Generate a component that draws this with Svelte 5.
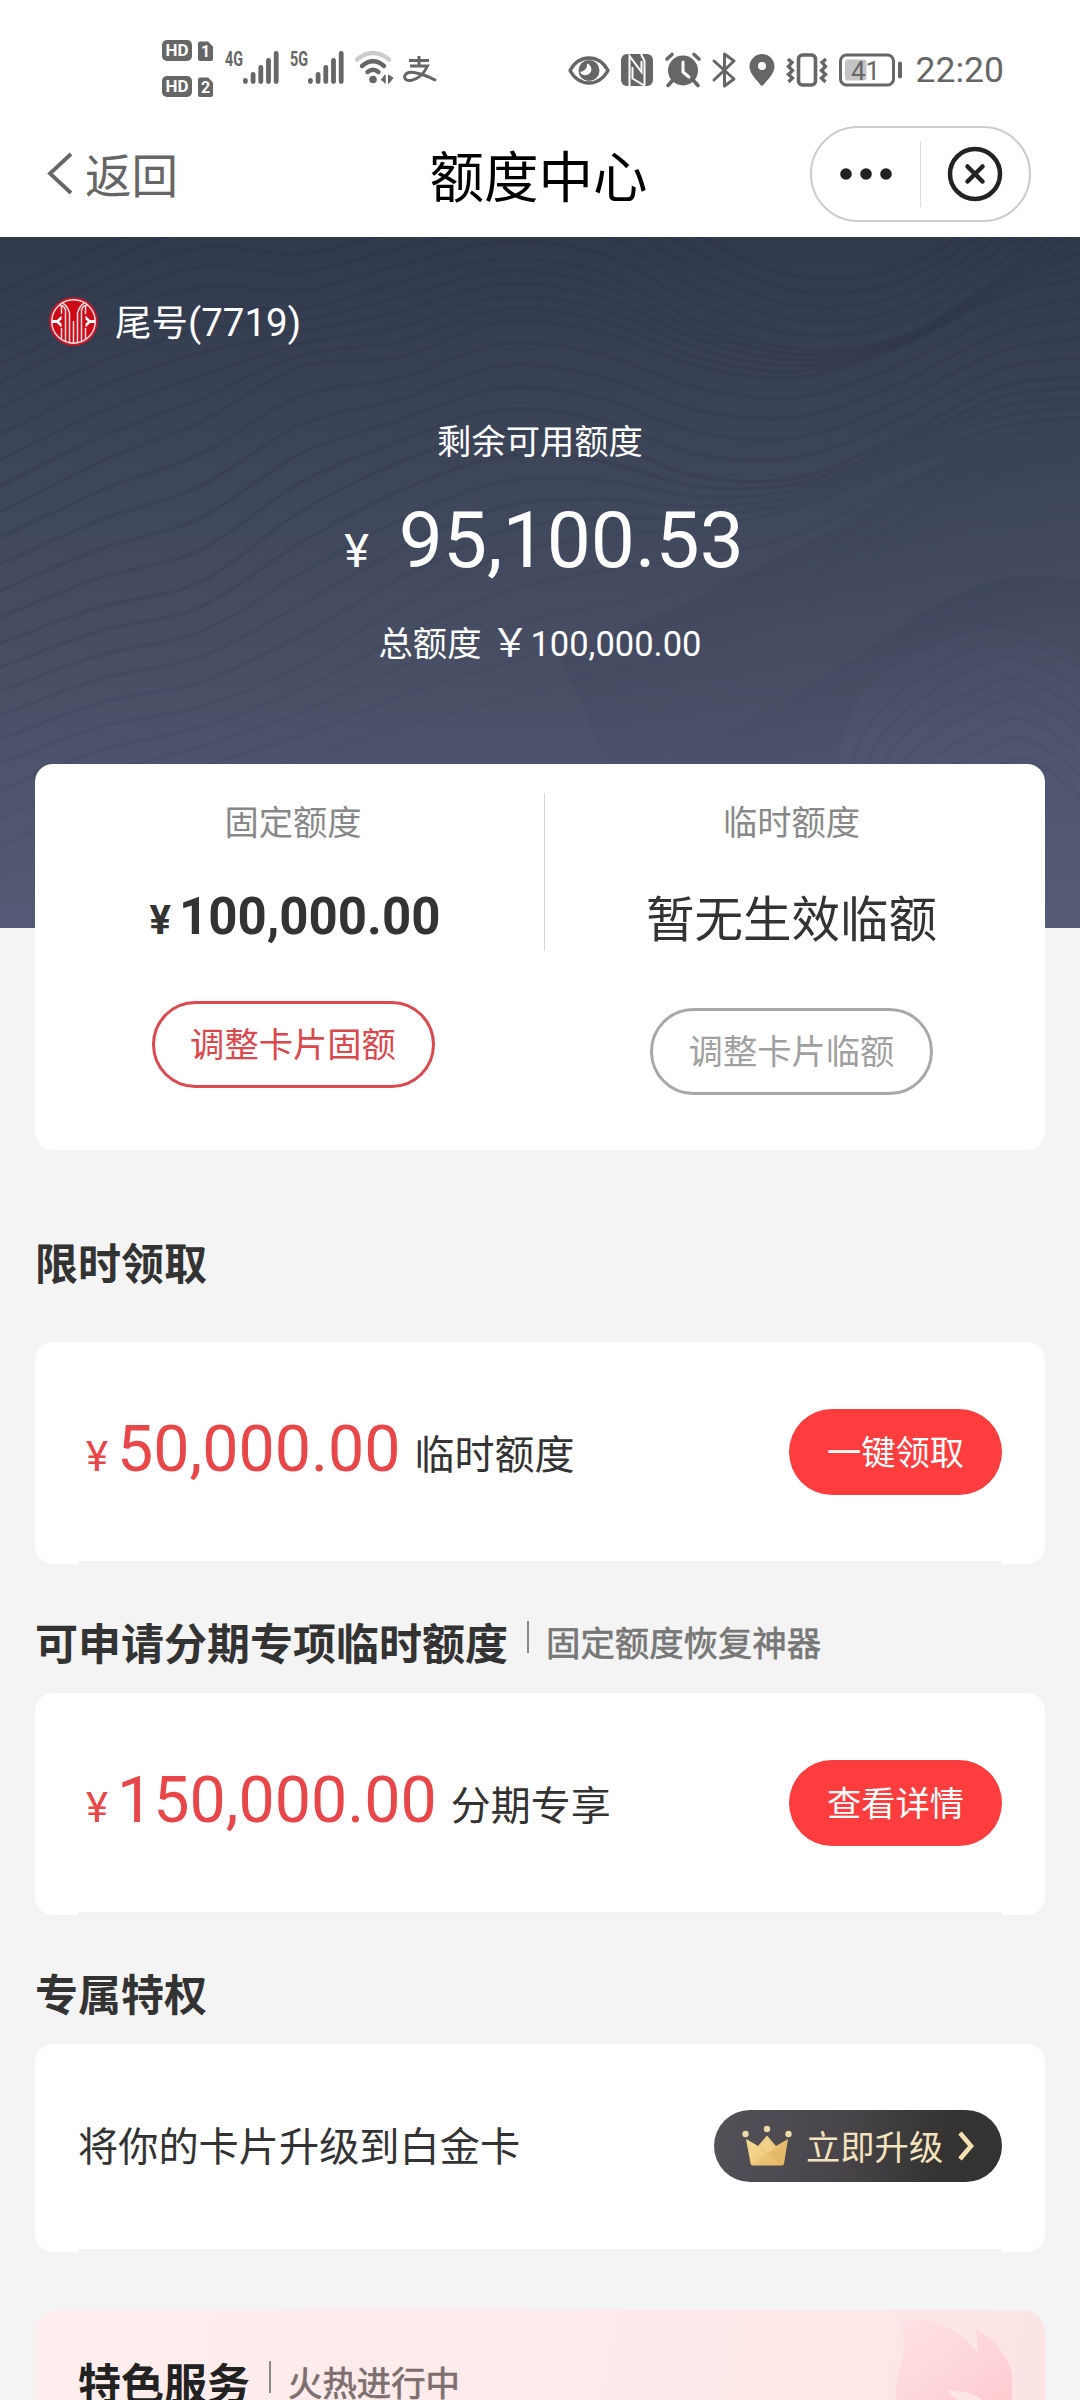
<script lang="ts">
	interface Offer {
		title: string,
		note?: string,
		amount: string,
		label: string,
		action: string,
	}

	const offers: Offer[] = [
		{ title: "限时领取", amount: "50,000.00", label: "临时额度", action: "一键领取" },
		{ title: "可申请分期专项临时额度", note: "固定额度恢复神器", amount: "150,000.00", label: "分期专享", action: "查看详情" },
	];

	// contour lines behind the balance: key curves, one y for each x, blended in steps
	const xs = [-10, 100, 200, 300, 400, 500, 600, 700, 800, 900, 1000, 1090];
	const keys = [
		[60, 10, -30, -20, -40, -60, -60, 0, 40, 30, -30, -120],
		[150, 100, 70, 72, 45, 22, 35, 85, 112, 100, 40, -30],
		[280, 225, 185, 130, 120, 85, 95, 130, 140, 110, 60, 40],
		[410, 370, 345, 275, 225, 195, 205, 240, 240, 200, 150, 140],
		[530, 490, 470, 430, 370, 320, 300, 290, 270, 230, 200, 190],
		[670, 610, 570, 545, 520, 500, 470, 440, 400, 320, 260, 230],
	];

	function smooth(ys: number[]){
		let d = `M${xs[0]} ${ys[0]}`;
		for (let i = 0; i < xs.length - 1; i++) {
			const p = Math.max(i - 1, 0);
			const n = Math.min(i + 2, xs.length - 1);
			d += `C${xs[i] + (xs[i + 1] - xs[p]) / 6} ${ys[i] + (ys[i + 1] - ys[p]) / 6} ${xs[i + 1] - (xs[n] - xs[i]) / 6} ${ys[i + 1] - (ys[n] - ys[i]) / 6} ${xs[i + 1]} ${ys[i + 1]}`;
		}
		return d;
	}

	const waves: string[] = [];
	for (let k = 0; k < keys.length - 1; k++) {
		for (let s = 0; s < 5; s++) {
			waves.push(smooth(keys[k].map((y, i) => y + (keys[k + 1][i] - y) * s / 5)));
		}
	}
	const rings = [0, 1, 2, 3, 4, 5, 6];
	const bars = [6, 12, 19, 26, 33];
</script>

{#snippet signal(label: string)}
	<svg class="signal" width="54" height="36" viewBox="0 0 54 36">
		<text x="0" y="16" font-size="20" textLength="18" lengthAdjust="spacingAndGlyphs">{label}</text>
		{#each bars as h, i}
			<rect x={18 + i * 7.7} y={34 - h} width="4.8" height={h} rx="2.4" />
		{/each}
	</svg>
{/snippet}

{#snippet hd(n: string)}
	<svg width="52" height="22" viewBox="0 0 52 22">
		<rect width="30" height="21" rx="5" />
		<text class="knock" x="3.5" y="16.3" font-size="17" textLength="23" lengthAdjust="spacingAndGlyphs">HD</text>
		<path d="M38 1.500h8l5 5V19q0 2-2 2H38q-2 0-2-2V3.500q0-2 2-2z" />
		<text class="knock" x="39" y="17.300" font-size="16">{n}</text>
	</svg>
{/snippet}

<div class="page">
	<div class="status">
		<div class="sims">
			{@render hd("1")}
			{@render hd("2")}
		</div>
		{@render signal("4G")}
		{@render signal("5G")}
		<svg class="wifi" width="42" height="36" viewBox="0 0 42 36">
			<g fill="none" stroke="#666" stroke-width="4.400" stroke-linecap="round">
				<path stroke="#ccc" d="M3 9.500Q19 -3.500 35 9.500" />
				<path d="M8 16q11-9.500 22 0M13.500 22q5.500-4.500 11 0" />
			</g>
			<circle cx="19" cy="29.500" r="3.800" />
			<path d="M31 25v8.500M27 30l4-5v8M34.500 25v8.500l4.500-5.500z" stroke="#666" stroke-width="1" />
		</svg>
		<svg class="pay" width="35" height="30" viewBox="0 0 35 30">
			<path d="M6 5.500h20M16 1v9.500M7 11h17.500Q19 23 8 25.500Q1.500 26 1.500 21.500Q3 16.500 11 17.500Q22 19.500 33 25.500" fill="none" stroke="#666" stroke-width="3" />
		</svg>

		<div class="right">
			<svg width="42" height="36" viewBox="0 0 42 36">
				<path d="M2 18.500Q9 6 21 6T40 18.500Q33 31 21 31T2 18.500z" fill="none" stroke="#666" stroke-width="3.400" stroke-linejoin="round" />
				<circle cx="21" cy="18.500" r="10.500" />
				<path d="M19 11.500a6 6 0 1 1-7 8.500a7.500 7.500 0 0 0 7-8.500z" fill="#fff" />
			</svg>
			<svg class="nfc" width="32" height="36" viewBox="0 0 32 36">
				<rect y="2" width="32" height="32" rx="6" />
				<path d="M8.500 34V4L20.500 20V9M11.500 15v11.500L24 34M23.500 33V9L20 2" fill="none" stroke="#fff" stroke-width="2" />
			</svg>
			<svg class="alarm" width="36" height="36" viewBox="0 0 36 36">
				<circle cx="18" cy="18.500" r="15" />
				<path d="M2 7l5-4.500M34 7l-5-4.500M7 29l-4 4.500M29 29l4 4.500" stroke="#666" stroke-width="3.600" stroke-linecap="round" />
				<path d="M18 10v10l6 5" fill="none" stroke="#fff" stroke-width="3" stroke-linecap="round" />
			</svg>
			<svg class="bt" width="24" height="36" viewBox="0 0 24 36">
				<path d="M2 9l20 18-9.500 7V2L22 9 2 28" fill="none" stroke="#666" stroke-width="3" stroke-linejoin="round" stroke-linecap="round" />
			</svg>
			<svg class="pin" width="26" height="36" viewBox="0 0 26 36">
				<path fill-rule="evenodd" d="M13 2a12.500 12.500 0 0 1 12.500 12.500C25.500 22 18 28 14.500 33q-1.500 1.500-3 0C8 28 .5 22 .5 14.500A12.500 12.500 0 0 1 13 2zM13 10a4 4 0 1 0 0 8a4 4 0 0 0 0-8z" />
			</svg>
			<svg class="vibrate" width="42" height="36" viewBox="0 0 42 36">
				<g fill="none" stroke="#666">
					<rect x="12.500" y="3" width="17" height="30" rx="4" stroke-width="3.600" />
					<path stroke-width="3.400" d="M2 7l4 3.500-3.500 4 4 4-4 4 4 3.500-4 4M40 7l-4 3.500 3.500 4-4 4 4 4-4 3.500 4 4" />
				</g>
			</svg>
			<svg class="battery" width="64" height="36" viewBox="0 0 64 36">
				<rect x="1.500" y="3" width="53" height="30" rx="6" fill="none" stroke="#666" stroke-width="3" />
				<rect x="6" y="7.500" width="21.500" height="21" rx="3" fill="#c4c4c4" />
				<rect x="59" y="9.500" width="4" height="17" rx="2" />
				<text class="charge" x="12" y="27.500" font-size="26">41</text>
			</svg>
			<span class="time">22:20</span>
		</div>
	</div>

	<div class="nav">
		<button class="back">
			<svg width="28" height="44" viewBox="0 0 28 44">
				<path d="M25 2L4 21.500 25 41" fill="none" stroke="#666" stroke-width="3.800" />
			</svg>
			<span>返回</span>
		</button>
		<h1>额度中心</h1>
		<div class="capsule">
			<svg width="54" height="60" viewBox="0 0 54 60">
				<circle cx="7" cy="30" r="5.800" />
				<circle cx="27" cy="30" r="5.800" />
				<circle cx="47" cy="30" r="5.800" />
			</svg>
			<span class="line"></span>
			<svg width="56" height="60" viewBox="0 0 56 60">
				<path d="M20.500 22.500l15 15m0-15l-15 15" stroke="#222" stroke-width="4.500" stroke-linecap="round" />
				<circle cx="28" cy="30" r="25" fill="none" stroke="#222" stroke-width="4.500" />
			</svg>
		</div>
	</div>

	<div class="hero">
		<svg class="waves" width="1080" height="691" viewBox="0 0 1080 691">
			<defs>
				<linearGradient id="fold" x1=".6" y1=".1" x2=".8" y2=".6">
					<stop offset="0" stop-color="#384057" stop-opacity=".45" />
					<stop offset="1" stop-color="#4a5068" stop-opacity="0" />
				</linearGradient>
				<linearGradient id="hill" x1="0" y1="0" x2="0" y2="1">
					<stop offset="0" stop-color="#555b75" stop-opacity=".1" />
					<stop offset="1" stop-color="#555b75" stop-opacity=".5" />
				</linearGradient>
			</defs>
			<g fill="none" stroke="#252d42" stroke-width="3.500">
				{#each waves as d, i}
					<path {d} stroke-opacity={i < 17 ? .16 : .16 - (i - 16) * .015} />
				{/each}
			</g>
			<path d="M560 420Q800 320 900 250T1080 215V480Q850 500 680 691z" fill="url(#fold)" />
			<path d="M640 540Q800 460 900 390T1080 345V560Q900 560 700 620z" fill="url(#fold)" />
			<path d="M840 530Q840 450 920 415T1010 395Q1060 400 1080 430V691H850z" fill="url(#hill)" />
			<g fill="none" stroke="#3c435b" stroke-opacity=".14" stroke-width="3.500">
				{#each rings as r}
					<path d="M{845 + r * 14} 560Q{850 + r * 14} {455 + r * 17} {1000 + r * 3} {400 + r * 20}Q1050 {405 + r * 20} 1090 {440 + r * 22}" />
				{/each}
			</g>
		</svg>

		<div class="bank">
			<svg width="49" height="49" viewBox="0 0 49 49">
				<circle cx="24.500" cy="24.500" r="24.300" fill="#cf1426" />
				<circle cx="24.500" cy="24.500" r="21.700" fill="#cc0a18" stroke="#fbdcdc" stroke-width="1.500" />
				<g fill="none" stroke="#fbdcdc" stroke-width="1.500">
					<path d="M16.500 44V13Q15 8 11 8.500M20.500 46V16Q18 8 14 6.500M32.500 44V13Q34 8 38 8.500M28.500 46V16Q31 8 35 6.500M24.500 24v22" />
					<path d="M12.500 8v9M36.500 8v9M12.500 31v11M36.500 31v11" />
				</g>
				<path d="M3 23h5l4.500-4.500v4L10 24.500l2.500 2v4L8 26H3zM46 23h-5l-4.500-4.500v4l2.500 2-2.500 2v4L41 26h5z" fill="#fff" />
			</svg>
			<span>尾号<b>(7719)</b></span>
		</div>
		<div class="caption">剩余可用额度</div>
		<div class="balance"><i>¥</i>95,100.53</div>
		<div class="total">总额度<em>￥</em><b>100,000.00</b></div>
	</div>

	<div class="card limits">
		<div class="col left">
			<div class="name">固定额度</div>
			<div class="value money"><i>¥</i>100,000.00</div>
			<button class="outline red">调整卡片固额</button>
		</div>
		<div class="rule"></div>
		<div class="col rgt">
			<div class="name">临时额度</div>
			<div class="value">暂无生效临额</div>
			<button class="outline">调整卡片临额</button>
		</div>
	</div>

	{#each offers as offer}
		<div class="heading" class:first={!offer.note}>
			<h2>{offer.title}</h2>
			{#if offer.note}
				<span class="bar"></span>
				<span class="note">{offer.note}</span>
			{/if}
		</div>
		<div class="card offer">
			<div class="sum">
				<i>¥</i><span class="num">{offer.amount}</span><span class="label">{offer.label}</span>
			</div>
			<button class="solid">{offer.action}</button>
		</div>
	{/each}

	<div class="heading">
		<h2>专属特权</h2>
	</div>
	<div class="card offer upgrade">
		<span class="text">将你的卡片升级到白金卡</span>
		<button class="gold">
			<svg width="50" height="42" viewBox="0 0 50 42">
				<defs>
					<linearGradient id="crown" x1="0" y1="0" x2="1" y2="1">
						<stop offset="0" stop-color="#f6d68b" />
						<stop offset="1" stop-color="#e3b765" />
					</linearGradient>
				</defs>
				<path d="M4 14l12 7 9-10.500L34 21l12-7-4 24.500q-.3 2-2 2H10.500q-1.700 0-2-2z" fill="url(#crown)" />
				<path d="M4 14l12 7 9 5L10 40zM25 11l-7 14 7 3 8-3z" fill="#fbe3a8" fill-opacity=".3" />
				<path d="M46 14L25 28l15 12z" fill="#d9a650" fill-opacity=".25" />
				<g fill="#ecd9a8">
					<circle cx="3.500" cy="9" r="3.200" />
					<circle cx="25" cy="4" r="3.200" />
					<circle cx="46.500" cy="9" r="3.200" />
				</g>
			</svg>
			<span>立即升级</span>
			<svg width="18" height="30" viewBox="0 0 18 30">
				<path d="M3 2l11 13L3 28" fill="none" stroke="#f6e0b2" stroke-width="4.600" />
			</svg>
		</button>
	</div>

	<div class="promo">
		<svg class="flame" width="130" height="90" viewBox="0 0 130 90">
			<defs>
				<linearGradient id="flame" x1="0" y1="0" x2="1" y2="1">
					<stop offset="0" stop-color="#fee3e5" />
					<stop offset="1" stop-color="#fdcbd0" />
				</linearGradient>
			</defs>
			<path d="M13 13Q23 10 37 10Q68 13 92 42Q94 30 90 18Q119 35 127 63V90H98Q84 80 62 80Q66 86 72 90H11V77Q13 62 18 48Q21 30 13 13z" fill="url(#flame)" />
		</svg>
		<h2>特色服务</h2>
		<span class="bar"></span>
		<span class="note">火热进行中</span>
	</div>
</div>

<style>
	:global(body){
		background: #f4f4f4;
	}
	.page{
		width: 1080px;
		height: 2400px;
		overflow: hidden;
		background: #f4f4f4;
		color: #333;
		font-family: "Noto Sans CJK SC", sans-serif;
	}
	button{
		font-family: inherit;
		border: none;
		background: none;
		padding: 0;
		box-sizing: border-box;
	}
	h1, h2{
		margin: 0;
	}
	i, em, b{
		font-style: normal;
		font-weight: 400;
		line-height: 1;
	}
	svg{
		display: block;
		flex: none;
		overflow: visible;
	}

	/* status bar */
	.status{
		height: 117px;
		background: #fff;
		display: flex;
		align-items: flex-start;
		padding: 0 76px 0 162px;
		fill: #666;
		font-family: Roboto, sans-serif;
		font-weight: 700;
	}
	.sims{
		display: flex;
		flex-direction: column;
		gap: 14px;
		margin: 40px 11px 0 0;
	}
	.knock{
		fill: #fff;
	}
	.signal{
		margin: 50px 11px 0 0;
	}
	.wifi{
		margin: 50px 0 0 -1px;
	}
	.pay{
		margin: 55px 0 0 7px;
	}
	.right{
		display: flex;
		align-items: center;
		margin: 50px 0 0 auto;
	}
	.nfc{ margin-left: 11px; }
	.alarm{ margin-left: 12px; }
	.bt{ margin-left: 11px; }
	.pin{ margin-left: 13px; }
	.vibrate{ margin-left: 11px; }
	.battery{ margin-left: 11px; }
	.charge{
		font-weight: 400;
	}
	.time{
		margin-left: 13px;
		font-size: 35.500px;
		line-height: 40px;
		font-weight: 400;
		color: #666;
	}

	/* title bar */
	.nav{
		height: 120px;
		background: #fff;
		display: grid;
		grid-template-columns: 1fr auto 1fr;
		align-items: center;
		padding: 0 49px 0 46px;
	}
	.back{
		display: flex;
		align-items: center;
		gap: 11px;
		font-size: 46.500px;
		line-height: 60px;
		margin-bottom: 6px;
		color: #666;
	}
	.back span{
		margin-top: -3px;
	}
	h1{
		font-size: 54.500px;
		line-height: 80px;
		margin-bottom: 6px;
		font-weight: 400;
		color: #000;
	}
	.capsule{
		justify-self: end;
		box-sizing: border-box;
		width: 221px;
		height: 96px;
		margin-bottom: 6px;
		border: 2px solid #ccc;
		border-radius: 48px;
		display: flex;
		align-items: center;
		justify-content: space-between;
		padding: 0 26px 0 27px;
		fill: #222;
	}
	.line{
		width: 1px;
		height: 66px;
		background: #ddd;
	}

	/* balance */
	.hero{
		position: relative;
		height: 691px;
		box-sizing: border-box;
		padding-top: 60px;
		background: linear-gradient(#31394d, #3f475b 38%, #4c5269 72%, #545a75);
		color: #fff;
		text-align: center;
	}
	.waves{
		position: absolute;
		inset: 0;
		overflow: hidden;
	}
	.bank{
		position: relative;
		display: flex;
		align-items: center;
		gap: 17px;
		height: 48px;
		padding-left: 49px;
		font-size: 36.500px;
		line-height: 48px;
	}
	.bank b{
		font-family: Roboto, sans-serif;
		font-size: 38.500px;
	}
	.caption{
		position: relative;
		margin-top: 70px;
		font-size: 34.300px;
		line-height: 48px;
	}
	.balance{
		position: relative;
		margin-top: 37px;
		height: 80px;
		font-family: Roboto, sans-serif;
		font-size: 78.500px;
		line-height: 80px;
		padding-left: 8px;
	}
	.balance i{
		font-size: 47px;
		margin-right: 30px;
	}
	.total{
		position: relative;
		display: flex;
		justify-content: center;
		align-items: baseline;
		margin-top: 37px;
		font-size: 34.300px;
		line-height: 48px;
	}
	.total em{
		font-size: 39px;
		margin-left: 9px;
	}
	.total b{
		font-family: Roboto, sans-serif;
		font-size: 34.500px;
		margin-left: 1px;
	}

	.card{
		margin: 0 35px;
		background: #fff;
		border-radius: 18px;
	}
	.limits{
		position: relative;
		margin-top: -164px;
		height: 386px;
		display: flex;
	}
	.col{
		box-sizing: border-box;
		display: flex;
		flex-direction: column;
		align-items: center;
		padding-top: 32px;
	}
	.left{
		width: 509px;
		padding-left: 7px;
	}
	.rgt{
		flex: 1;
		padding-right: 7px;
	}
	.rule{
		width: 1px;
		height: 158px;
		margin-top: 29px;
		background: #d5d5d5;
	}
	.name{
		font-size: 34.300px;
		line-height: 48px;
		color: #888;
	}
	.value{
		margin-top: 42px;
		height: 60px;
		font-size: 48.500px;
		line-height: 61px;
	}
	.money{
		font-family: Roboto, sans-serif;
		font-weight: 700;
		font-size: 51px;
		padding-left: 4px;
	}
	.money i{
		font-size: 40px;
		font-weight: 700;
		margin-right: 8px;
	}
	.outline{
		width: 283px;
		height: 87px;
		margin-top: 62px;
		padding-bottom: 5px;
		border: 3px solid #a8a8a8;
		border-radius: 44px;
		font-size: 34.300px;
		color: #a0a0a0;
	}
	.red{
		margin-top: 55px;
		border-color: #d9494f;
		color: #d9484c;
	}

	.heading{
		display: flex;
		height: 60px;
		margin: 47px 35px 22px;
	}
	.first{
		margin: 81px 35px 51px;
	}
	h2{
		font-size: 43px;
		line-height: 60px;
		font-weight: 700;
	}
	.bar{
		width: 2px;
		height: 32px;
		margin: 10px 17px 0 19px;
		background: #8a8a8a;
	}
	.note{
		font-size: 34.400px;
		line-height: 60px;
		-webkit-text-stroke: .7px;
		color: #777;
	}

	.offer{
		display: flex;
		justify-content: space-between;
		align-items: flex-start;
		box-sizing: border-box;
		height: 222px;
		padding: 67px 43px 0 43px;
		/* hairline closing the list inside the card */
		background: linear-gradient(#f3f3f3, #f3f3f3) 50% 100% / 924px 3px no-repeat #fff;
	}
	.sum{
		display: flex;
		align-items: baseline;
		margin: 7px 0 0 8px;
		font-family: Roboto, sans-serif;
		color: #e8474a;
		line-height: 66px;
	}
	.sum i{
		font-size: 42px;
	}
	.num{
		font-size: 64.500px;
		margin-left: 9px;
	}
	.label{
		position: relative;
		top: -2px;
		margin-left: 14px;
		font-family: "Noto Sans CJK SC", sans-serif;
		font-size: 40px;
		line-height: 60px;
		color: #333;
	}
	.solid{
		width: 213px;
		height: 86px;
		padding-bottom: 4px;
		border-radius: 43px;
		background: #ff3c3e;
		color: #fff;
		font-size: 34.300px;
	}

	.upgrade{
		height: 208px;
		padding-top: 66px;
	}
	.text{
		font-size: 40.200px;
		line-height: 68px;
	}
	.gold{
		display: flex;
		align-items: center;
		width: 288px;
		height: 72px;
		padding-left: 28px;
		border-radius: 36px;
		background: linear-gradient(100deg, #545259, #474549 45%, #343331 80%);
		color: #f5e3be;
		font-size: 34.300px;
	}
	.gold span{
		line-height: 64px;
		padding-bottom: 3px;
		margin: 0 14px 0 14px;
	}

	.promo{
		position: relative;
		display: flex;
		height: 120px;
		margin: 58px 35px 0;
		padding: 41px 43px 0;
		border-radius: 22px;
		background: linear-gradient(100deg, #feeeee, #fde9e9 60%, #fde4e4);
		color: #222;
	}
	.promo .note{
		color: #7d6f6f;
	}
	.flame{
		position: absolute;
		right: 30px;
		top: 0;
	}
</style>
